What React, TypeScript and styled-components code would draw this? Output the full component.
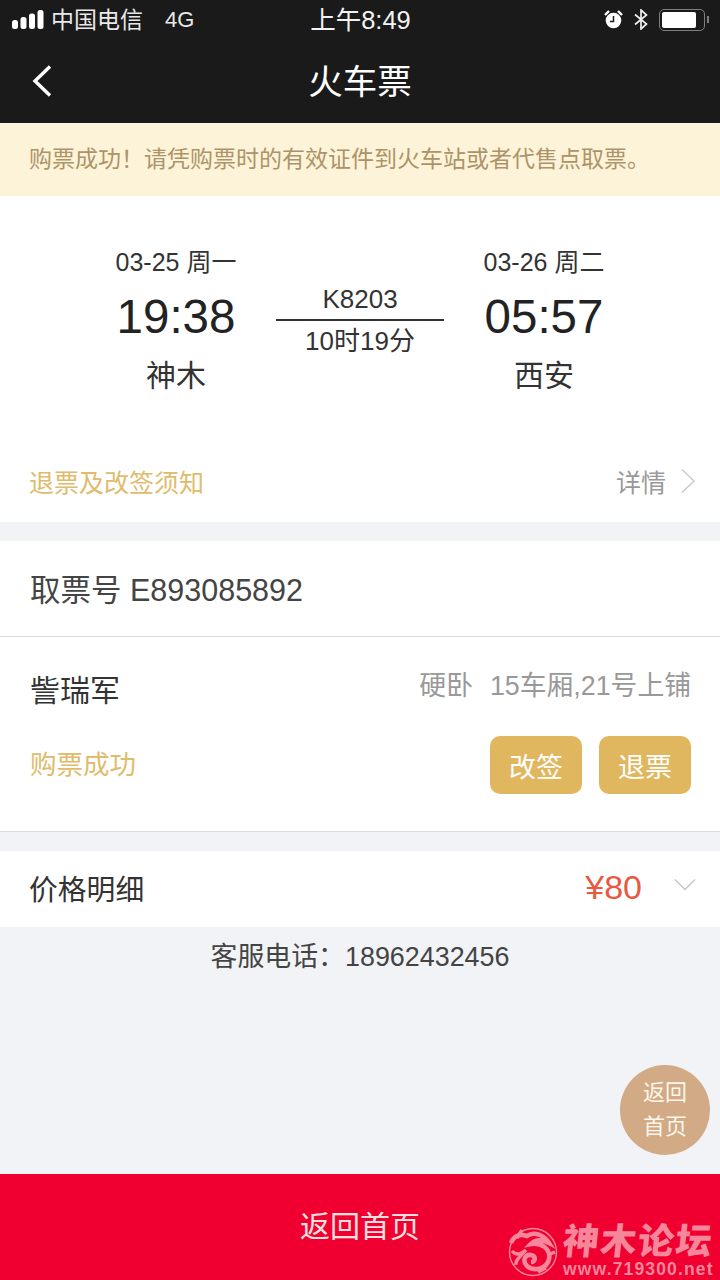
import React from 'react';
import styled, { createGlobalStyle } from 'styled-components';

const FONT = '"Liberation Sans", "Noto Sans CJK SC", sans-serif';

const GlobalStyle = createGlobalStyle`
  html, body {
    margin: 0;
    padding: 0;
    background: #f2f3f6;
    font-family: ${FONT};
  }
`;

const App = () => (
  <>
    <GlobalStyle />
    <Page>
      <Header>
        <StatusBar>
          <StatusLeft>
            <Signal viewBox="0 0 32 19">
              <rect x="0" y="10" width="6" height="9" rx="2.5" />
              <rect x="8.5" y="7" width="6" height="12" rx="2.5" />
              <rect x="17" y="3.5" width="6" height="15.5" rx="2.5" />
              <rect x="25.5" y="0" width="6" height="19" rx="2.5" />
            </Signal>
            <Carrier>中国电信</Carrier>
            <Network>4G</Network>
          </StatusLeft>
          <Clock>上午8:49</Clock>
          <StatusRight>
            <svg width="19" height="19" viewBox="0 0 19 19">
              <path d="M1 5 L5 1 M18 5 L14 1" stroke="#fff" strokeWidth="2.4" />
              <circle cx="9.5" cy="10.5" r="7.8" fill="#fff" />
              <path d="M9.5 6 V11.5 H6" stroke="#1a1a1a" strokeWidth="1.5" fill="none" />
            </svg>
            <BluetoothIcon width="14" height="21" viewBox="0 0 14 21">
              <path d="M1 5.5 L12.5 15 L7 20 V1 L12.5 6 L1 15.5" fill="none" stroke="#f0f0f0" strokeWidth="1.7" />
            </BluetoothIcon>
            <Battery>
              <BatteryFill />
            </Battery>
            <BatteryTip />
          </StatusRight>
        </StatusBar>
        <NavBar>
          <BackButton width="24" height="34" viewBox="0 0 24 34">
            <path d="M20 2.5 L5 17 L20 31.5" fill="none" stroke="#fff" strokeWidth="3.4" />
          </BackButton>
          <Title>火车票</Title>
        </NavBar>
      </Header>

      <Notice>购票成功！请凭购票时的有效证件到火车站或者代售点取票。</Notice>

      <TicketCard>
        <Journey>
          <Stop>
            <StopDate>03-25 周一</StopDate>
            <StopTime>19:38</StopTime>
            <StopName>神木</StopName>
          </Stop>
          <Train>
            <TrainNo>K8203</TrainNo>
            <TrainLine />
            <TrainNo>10时19分</TrainNo>
          </Train>
          <Stop>
            <StopDate>03-26 周二</StopDate>
            <StopTime>05:57</StopTime>
            <StopName>西安</StopName>
          </Stop>
        </Journey>
        <RefundRow>
          <GoldText $size={25}>退票及改签须知</GoldText>
          <DetailLink>
            详情
            <svg width="16" height="26" viewBox="0 0 16 26">
              <path d="M2 1.5 L14 13 L2 24.5" fill="none" stroke="#c9c9c9" strokeWidth="1.4" />
            </svg>
          </DetailLink>
        </RefundRow>
      </TicketCard>

      <PickupRow>取票号 E893085892</PickupRow>
      <PassengerCard>
        <PassengerTop>
          <PassengerName>訾瑞军</PassengerName>
          <SeatInfo>
            <span>硬卧</span>
            <span>15车厢,21号上铺</span>
          </SeatInfo>
        </PassengerTop>
        <PassengerBottom>
          <GoldText $size={26.5}>购票成功</GoldText>
          <Actions>
            <ActionButton>改签</ActionButton>
            <ActionButton>退票</ActionButton>
          </Actions>
        </PassengerBottom>
      </PassengerCard>

      <PriceRow>
        <PriceLabel>价格明细</PriceLabel>
        <PriceRight>
          <Price>¥80</Price>
          <PriceChevron width="22" height="14" viewBox="0 0 22 14">
            <path d="M1 1.5 L11 11.5 L21 1.5" fill="none" stroke="#c4c4c4" strokeWidth="1.3" />
          </PriceChevron>
        </PriceRight>
      </PriceRow>

      <Content>
        <Service>客服电话：18962432456</Service>
        <FloatingHome>
          返回
          <br />
          首页
        </FloatingHome>
      </Content>

      <Footer>
        返回首页
        <Watermark>
          <svg width="50" height="50" viewBox="0 0 50 50" fill="none" stroke="#f6869a">
            <circle cx="25" cy="25" r="23.5" strokeWidth="1.4" />
            <path d="M3 16 C6 8 13 7 19 9 C26 4 36 8 41 16 C33 12 27 13 23 17 C33 15 43 22 41 32 C39 42 26 45 19 39 C14 34 17 27 23 28 C28 29 28 35 23 35" strokeWidth="4.6" />
            <path d="M4 24 C8 29 14 27 18 23 C12 30 7 33 8 38 M9 11 L14 3 M40 28 L47 25 M30 45 L38 41" strokeWidth="3.4" />
          </svg>
          <WatermarkText>
            <WatermarkName>神木论坛</WatermarkName>
            <WatermarkUrl>www.719300.net</WatermarkUrl>
          </WatermarkText>
        </Watermark>
      </Footer>
    </Page>
  </>
);

const Page = styled.div`
  width: 720px;
  height: 1280px;
  display: flex;
  flex-direction: column;
  overflow: hidden;
  background: #f2f3f6;
  color: #333;
`;

const Header = styled.header`
  height: 123px;
  flex: none;
  background: #1a1a1a;
  color: #fff;
`;

const StatusBar = styled.div`
  height: 39px;
  display: grid;
  grid-template-columns: 1fr auto 1fr;
  align-items: center;
  padding: 0 11px 0 12px;
`;

const StatusLeft = styled.div`
  display: flex;
  align-items: center;
`;

const Signal = styled.svg`
  width: 32px;
  height: 19px;
  fill: #fff;
`;

const Carrier = styled.span`
  margin-left: 7px;
  font-size: 23px;
  line-height: 30px;
  color: #e8e8e8;
`;

const Network = styled.span`
  margin-left: 22px;
  font-size: 22px;
  line-height: 30px;
  color: #e8e8e8;
`;

const Clock = styled.span`
  font-size: 25.5px;
  line-height: 30px;
  color: #f2f2f2;
`;

const StatusRight = styled.div`
  display: flex;
  align-items: center;
  justify-content: flex-end;
`;

const BluetoothIcon = styled.svg`
  margin-left: 11px;
`;

const Battery = styled.div`
  box-sizing: border-box;
  width: 46px;
  height: 22px;
  margin-left: 11px;
  padding: 2px;
  border: 1.5px solid #7d7d7d;
  border-radius: 5px;
`;

const BatteryFill = styled.div`
  width: 34px;
  height: 100%;
  background: #fff;
  border-radius: 2px;
`;

const BatteryTip = styled.div`
  width: 2px;
  height: 7px;
  margin-left: 2px;
  background: #7d7d7d;
`;

const NavBar = styled.div`
  position: relative;
  height: 84px;
  display: flex;
  align-items: center;
  justify-content: center;
`;

const BackButton = styled.svg`
  position: absolute;
  left: 30px;
  top: 25px;
`;

const Title = styled.h1`
  margin: 2px 0 0;
  font-size: 34.5px;
  font-weight: 400;
  line-height: 1;
`;

const Notice = styled.div`
  height: 73px;
  flex: none;
  box-sizing: border-box;
  padding-left: 29px;
  background: #fdf3d9;
  color: #ad9468;
  font-size: 23px;
  line-height: 73px;
`;

const TicketCard = styled.section`
  height: 326px;
  flex: none;
  box-sizing: border-box;
  background: #fff;
  display: flex;
  flex-direction: column;
`;

const Journey = styled.div`
  display: grid;
  grid-template-columns: 168px 168px 168px;
  justify-content: center;
  gap: 16px;
  padding-top: 48px;
`;

const Stop = styled.div`
  display: flex;
  flex-direction: column;
  align-items: center;
`;

const StopDate = styled.div`
  font-size: 25px;
  line-height: 36px;
  color: #333;
`;

const StopTime = styled.div`
  margin-top: 9px;
  font-size: 47.5px;
  line-height: 56px;
  color: #222;
`;

const StopName = styled.div`
  margin-top: 10px;
  font-size: 30px;
  line-height: 42px;
  color: #333;
`;

const Train = styled.div`
  padding-top: 37px;
  display: flex;
  flex-direction: column;
  align-items: center;
`;

const TrainNo = styled.div`
  font-size: 26px;
  line-height: 36px;
  color: #333;
`;

const TrainLine = styled.div`
  width: 100%;
  height: 2px;
  margin: 2px 0;
  background: #333;
`;

const RefundRow = styled.div`
  margin-top: auto;
  height: 76px;
  padding: 0 24px 6px 29px;
  box-sizing: border-box;
  display: flex;
  align-items: center;
  justify-content: space-between;
`;

const GoldText = styled.span<{ $size: number }>`
  font-size: ${({ $size }) => $size}px;
  color: #e0bb6c;
`;

const DetailLink = styled.span`
  display: flex;
  align-items: center;
  gap: 14px;
  font-size: 25px;
  color: #999;
`;

const PickupRow = styled.div`
  height: 96px;
  flex: none;
  margin-top: 19px;
  box-sizing: border-box;
  padding-left: 30px;
  background: #fff;
  border-bottom: 1px solid #dcdcdc;
  font-size: 30.5px;
  line-height: 98px;
  color: #444;
`;

const PassengerCard = styled.section`
  height: 195px;
  flex: none;
  box-sizing: border-box;
  padding: 30px 29px 0 30px;
  background: #fff;
  border-bottom: 1px solid #dcdcdc;
`;

const PassengerTop = styled.div`
  display: flex;
  justify-content: space-between;
  align-items: flex-start;
`;

const PassengerName = styled.span`
  font-size: 30px;
  line-height: 48px;
  color: #333;
`;

const SeatInfo = styled.span`
  display: flex;
  gap: 17px;
  font-size: 26.8px;
  line-height: 38px;
  color: #999;
`;

const PassengerBottom = styled.div`
  margin-top: 21px;
  height: 58px;
  display: flex;
  justify-content: space-between;
  align-items: center;

  & > span {
    padding-bottom: 6px;
  }
`;

const Actions = styled.div`
  display: flex;
  gap: 17px;
`;

const ActionButton = styled.button`
  width: 92px;
  height: 58px;
  padding: 0;
  border: none;
  border-radius: 10px;
  background: #e0b75f;
  color: #fff;
  font-family: ${FONT};
  font-size: 27px;
`;

const PriceRow = styled.div`
  height: 76px;
  flex: none;
  box-sizing: border-box;
  margin-top: 19px;
  padding: 0 24px 3px 29px;
  display: flex;
  align-items: center;
  justify-content: space-between;
  background: #fff;
`;

const PriceLabel = styled.span`
  font-size: 28.8px;
  color: #333;
`;

const PriceRight = styled.div`
  display: flex;
  align-items: center;
  gap: 32px;
`;

const Price = styled.span`
  font-size: 34px;
  color: #e8593f;
`;

const PriceChevron = styled.svg`
  margin-bottom: 5px;
`;

const Content = styled.main`
  position: relative;
  flex: 1;
  padding-top: 12px;
  text-align: center;
`;

const Service = styled.div`
  font-size: 26.9px;
  line-height: 36px;
  color: #444;
`;

const FloatingHome = styled.div`
  position: absolute;
  right: 10px;
  top: 138px;
  width: 90px;
  height: 90px;
  border-radius: 50%;
  background: #d2aa86;
  color: #fdf6ea;
  font-size: 22px;
  line-height: 34px;
  display: flex;
  align-items: center;
  justify-content: center;
`;

const Footer = styled.footer`
  position: relative;
  height: 106px;
  flex: none;
  background: #ef0030;
  color: #fbe0df;
  font-size: 30px;
  line-height: 105px;
  text-align: center;
`;

const Watermark = styled.div`
  position: absolute;
  left: 508px;
  top: 51px;
  display: flex;
  align-items: center;
  gap: 5px;
  line-height: 1;
`;

const WatermarkText = styled.div`
  display: flex;
  flex-direction: column;
  gap: 3px;
  color: #f6869a;
  text-align: left;
`;

const WatermarkName = styled.span`
  display: block;
  font-size: 36px;
  font-weight: 900;
  letter-spacing: 1.5px;
  line-height: 33px;
  transform: skewX(-6deg);
`;

const WatermarkUrl = styled.span`
  font-size: 17.5px;
  font-weight: 700;
  letter-spacing: 1.15px;
`;

export default App;
